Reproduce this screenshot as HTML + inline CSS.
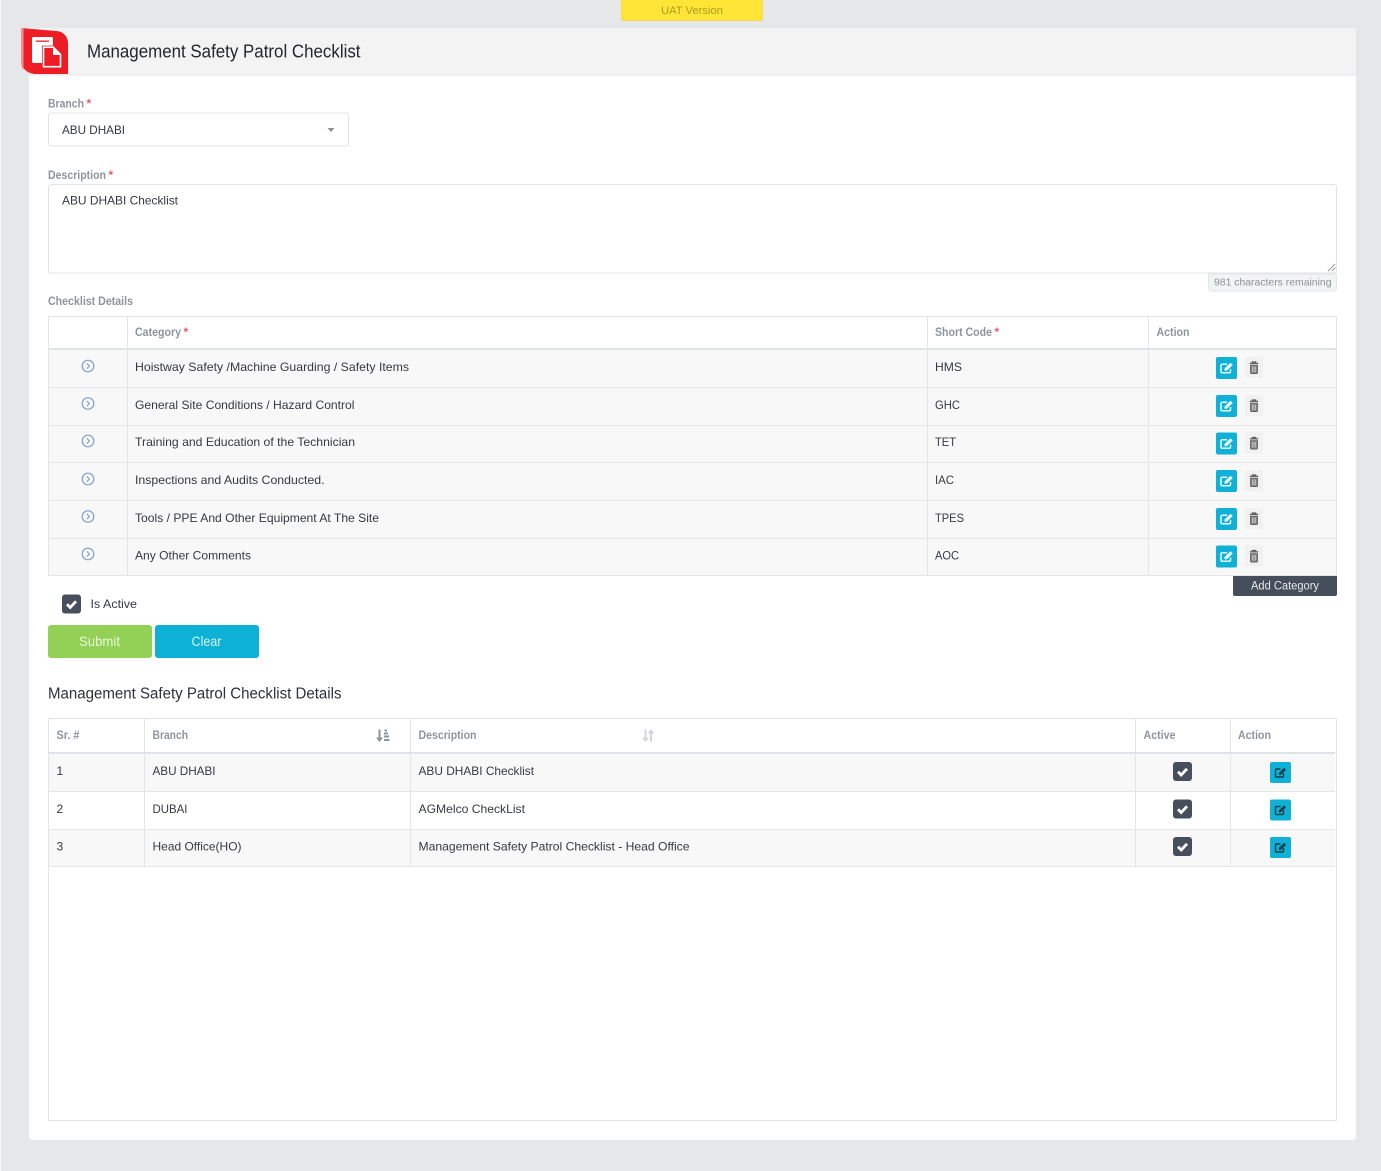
<!DOCTYPE html>
<html lang="en">
<head>
<meta charset="utf-8">
<title>Management Safety Patrol Checklist</title>
<style>
html,body{margin:0;padding:0;width:1381px;height:1171px;overflow:hidden;background:#e6e7e9}
svg{display:block}
text{font-family:"Liberation Sans",Arial,sans-serif;fill:#35393f;font-size:12px}
.lb{font-weight:bold;fill:#8f949c;font-size:11.5px}
.st{fill:#ee5a5f;font-weight:bold;font-size:12px}
.ln{fill:none;stroke:#e3e5e8;stroke-width:1}
</style>
</head>
<body>
<svg width="1381" height="1171" viewBox="0 0 1381 1171" xmlns="http://www.w3.org/2000/svg">
<defs>
<g id="edit">
  <rect x="0" y="0" width="21" height="22" rx="2" fill="#0fb1d6"/>
  <path d="M14.500 12v2.500a1.200 1.200 0 0 1-1.200 1.200H6.200A1.200 1.200 0 0 1 5 14.500V8.500a1.200 1.200 0 0 1 1.200-1.200h5" fill="none" stroke="#e8fbff" stroke-width="1.500"/>
  <path d="M8.500 11.500 14.500 5.800 16.800 8 10.800 13.700H8.500z" fill="#e8fbff"/>
</g>
<g id="edit2">
  <rect x="0" y="0" width="21" height="21" rx="2" fill="#0fb1d6"/>
  <path d="M13.500 11v3a1 1 0 0 1-1 1h-6a1 1 0 0 1-1-1V8a1 1 0 0 1 1-1h4" fill="none" stroke="#123f4d" stroke-width="1.400"/>
  <path d="M8.800 11 14.200 5.800 16.200 7.700 10.800 13H8.800z" fill="#123f4d"/>
</g>
<g id="trash">
  <rect x="0" y="0" width="18" height="21" rx="2" fill="#f1f1f2"/>
  <path d="M5.600 8.200h6.800v7.300a1 1 0 0 1-1 1H6.600a1 1 0 0 1-1-1z" fill="#8a8a8a" stroke="#5e5e5e" stroke-width="1"/>
  <path d="M4.800 6.400h8.400M7.300 6.200V5h3.400v1.200" fill="none" stroke="#5e5e5e" stroke-width="1.200"/>
  <path d="M7.600 9.500v5.500M9 9.500v5.500M10.400 9.500v5.500" stroke="#e4e4e4" stroke-width=".5"/>
</g>
<g id="arrowc">
  <circle cx="0" cy="0" r="5.800" fill="none" stroke="#7da0cc" stroke-width="1.200"/>
  <path d="M-1.200-2.600 1.400 0-1.200 2.600" fill="none" stroke="#7da0cc" stroke-width="1.100"/>
</g>
<g id="chk">
  <rect x="0" y="0" width="19" height="19" rx="3" fill="#474f5c"/>
  <path d="M5 9.800 8.200 13 14 6.800" fill="none" stroke="#fff" stroke-width="2.800"/>
</g>
</defs>

<rect width="1381" height="1171" fill="#e6e7e9"/>
<rect x="0" y="0" width="1" height="1171" fill="#f4f4f5"/>

<!-- card -->
<rect x="29" y="28" width="1327" height="1112" rx="4" fill="#fff"/>
<path d="M29 28h1327v47H29z" fill="#f3f3f4"/>
<rect x="29" y="74.500" width="1327" height="1" fill="#e6e6e8"/>

<!-- UAT -->
<rect x="621.500" y="-3" width="141" height="23.500" rx="2" fill="#ffe535" stroke="#f3d746"/>
<text x="661" y="14" style="font-size:11px;fill:#ad9c22" textLength="62" lengthAdjust="spacingAndGlyphs">UAT Version</text>

<!-- logo -->
<path d="M21 28v32a14 14 0 0 0 14 14h33V43a12 12 0 0 0-12-12H30z" fill="#ee1c25"/>
<path d="M21 28l9 3h26a12 12 0 0 1 0 0z" fill="#ee1c25"/>
<path d="M21 28h2.500v42a14 14 0 0 1-2.500-10z" fill="#f58e92"/>
<rect x="32" y="37" width="21" height="26" rx="1.500" fill="#fff"/>
<rect x="36" y="40.500" width="13" height="1.300" fill="#ee1c25"/>
<path d="M43.500 47.200h9.800l7.200 7.300v12.200h-17z" fill="#ee1c25" stroke="#ee1c25" stroke-width="3.200"/>
<path d="M43.500 47.200h9.800l7.200 7.300v12.200h-17z" fill="#ee1c25" stroke="#fff" stroke-width="1.600"/>
<path d="M53 47.500v7.500h7.500z" fill="#fff"/>
<text x="87" y="57.500" style="font-size:18px;fill:#23262b" textLength="273.500" lengthAdjust="spacingAndGlyphs">Management Safety Patrol Checklist</text>

<!-- branch -->
<text class="lb" x="48" y="107.500" textLength="36" lengthAdjust="spacingAndGlyphs">Branch</text>
<text class="st" x="86.500" y="107.500">*</text>
<rect x="48.500" y="113" width="300" height="33" rx="3" fill="#fff" stroke="#e0e3e6"/>
<text x="62" y="134" textLength="63" lengthAdjust="spacingAndGlyphs">ABU DHABI</text>
<path d="M327.500 128h7l-3.500 4z" fill="#8b9097"/>

<!-- description -->
<text class="lb" x="48" y="179" textLength="58" lengthAdjust="spacingAndGlyphs">Description</text>
<text class="st" x="108.500" y="179">*</text>
<rect x="48.500" y="184.500" width="1288" height="88.500" rx="3" fill="#fff" stroke="#e0e3e6"/>
<text x="62" y="204.500" textLength="116" lengthAdjust="spacingAndGlyphs">ABU DHABI Checklist</text>
<path d="M1328 271l7-7M1332 271l3.500-3.500" stroke="#9a9a9a" stroke-width="1" fill="none"/>
<path d="M1208.500 274h128v14a3 3 0 0 1-3 3h-122a3 3 0 0 1-3-3z" fill="#f2f3f4" stroke="#e3e5e8"/>
<text x="1214" y="285.500" style="font-size:10.500px;fill:#8d9199" textLength="117.500" lengthAdjust="spacingAndGlyphs">981 characters remaining</text>

<!-- checklist -->
<text class="lb" x="48" y="305" textLength="85" lengthAdjust="spacingAndGlyphs">Checklist Details</text>

<rect x="48.500" y="316.500" width="1288" height="259" fill="#fff"/>
<rect x="49" y="350" width="1287" height="225" fill="#f8f8f8"/>
<rect x="49" y="348" width="1287" height="2" fill="#dfe2e6"/>
<path class="ln" d="M49 387.500h1287M49 425.500h1287M49 462.500h1287M49 500.500h1287M49 538.500h1287"/>
<rect class="ln" x="48.500" y="316.500" width="1288" height="259"/>
<path class="ln" d="M127.500 317v258M927.500 317v258M1148.500 317v258"/>

<text class="lb" x="135" y="336" textLength="46" lengthAdjust="spacingAndGlyphs">Category</text>
<text class="st" x="183.500" y="336">*</text>
<text class="lb" x="935" y="336" textLength="57" lengthAdjust="spacingAndGlyphs">Short Code</text>
<text class="st" x="994.500" y="336">*</text>
<text class="lb" x="1156.500" y="336" textLength="33" lengthAdjust="spacingAndGlyphs">Action</text>

<text x="135" y="371" textLength="274" lengthAdjust="spacingAndGlyphs">Hoistway Safety /Machine Guarding / Safety Items</text>
<text x="135" y="409" textLength="219.500" lengthAdjust="spacingAndGlyphs">General Site Conditions / Hazard Control</text>
<text x="135" y="446" textLength="220" lengthAdjust="spacingAndGlyphs">Training and Education of the Technician</text>
<text x="135" y="484" textLength="189.500" lengthAdjust="spacingAndGlyphs">Inspections and Audits Conducted.</text>
<text x="135" y="522" textLength="244" lengthAdjust="spacingAndGlyphs">Tools / PPE And Other Equipment At The Site</text>
<text x="135" y="559.500" textLength="116" lengthAdjust="spacingAndGlyphs">Any Other Comments</text>

<text x="935" y="371" textLength="27" lengthAdjust="spacingAndGlyphs">HMS</text>
<text x="935" y="409" textLength="25" lengthAdjust="spacingAndGlyphs">GHC</text>
<text x="935" y="446" textLength="21" lengthAdjust="spacingAndGlyphs">TET</text>
<text x="935" y="484" textLength="19" lengthAdjust="spacingAndGlyphs">IAC</text>
<text x="935" y="522" textLength="29" lengthAdjust="spacingAndGlyphs">TPES</text>
<text x="935" y="559.500" textLength="24" lengthAdjust="spacingAndGlyphs">AOC</text>

<use href="#arrowc" x="88" y="366"/>
<use href="#arrowc" x="88" y="403.500"/>
<use href="#arrowc" x="88" y="441"/>
<use href="#arrowc" x="88" y="479"/>
<use href="#arrowc" x="88" y="516.500"/>
<use href="#arrowc" x="88" y="554"/>

<use href="#edit" x="1216" y="357"/><use href="#trash" x="1245" y="357"/>
<use href="#edit" x="1216" y="395"/><use href="#trash" x="1245" y="395"/>
<use href="#edit" x="1216" y="432.500"/><use href="#trash" x="1245" y="432.500"/>
<use href="#edit" x="1216" y="470"/><use href="#trash" x="1245" y="470"/>
<use href="#edit" x="1216" y="508"/><use href="#trash" x="1245" y="508"/>
<use href="#edit" x="1216" y="545.500"/><use href="#trash" x="1245" y="545.500"/>

<!-- add category -->
<path d="M1233 576h104v18a2 2 0 0 1-2 2h-100a2 2 0 0 1-2-2z" fill="#454e5b"/>
<text x="1251" y="589.500" style="font-size:11.500px;fill:#e6e8ea" textLength="68" lengthAdjust="spacingAndGlyphs">Add Category</text>

<!-- active -->
<use href="#chk" x="62" y="594.500"/>
<text x="90.500" y="608" textLength="46.500" lengthAdjust="spacingAndGlyphs">Is Active</text>

<!-- buttons -->
<rect x="48" y="625" width="104" height="33" rx="3" fill="#92d156"/>
<text x="79" y="646" style="font-size:14px;fill:#e9f7da" textLength="41" lengthAdjust="spacingAndGlyphs">Submit</text>
<rect x="155" y="625" width="104" height="33" rx="3" fill="#0db1d5"/>
<text x="191.500" y="646" style="font-size:14px;fill:#d8f4fa" textLength="30" lengthAdjust="spacingAndGlyphs">Clear</text>

<text x="48" y="698.500" style="font-size:15.500px;fill:#2e3136" textLength="293.500" lengthAdjust="spacingAndGlyphs">Management Safety Patrol Checklist Details</text>

<!-- table 2 -->
<rect x="48.500" y="718.500" width="1288" height="402" fill="#fff"/>
<rect x="49" y="754" width="1286" height="37" fill="#f8f8f8"/>
<rect x="49" y="830" width="1286" height="36" fill="#f8f8f8"/>
<rect x="49" y="752" width="1286" height="2" fill="#dfe2e6"/>
<path class="ln" d="M49 791.500h1286M49 829.500h1286M49 866.500h1286"/>
<rect class="ln" x="48.500" y="718.500" width="1288" height="402"/>
<path class="ln" d="M144.500 719v147M410.500 719v147M1135.500 719v147M1230.500 719v147"/>

<text class="lb" x="56.500" y="739" textLength="23" lengthAdjust="spacingAndGlyphs">Sr. #</text>
<text class="lb" x="152.500" y="739" textLength="35.500" lengthAdjust="spacingAndGlyphs">Branch</text>
<text class="lb" x="418.500" y="739" textLength="58" lengthAdjust="spacingAndGlyphs">Description</text>
<text class="lb" x="1143.500" y="739" textLength="32" lengthAdjust="spacingAndGlyphs">Active</text>
<text class="lb" x="1238" y="739" textLength="33" lengthAdjust="spacingAndGlyphs">Action</text>

<path d="M379.500 729.500v11" fill="none" stroke="#8f949b" stroke-width="2"/>
<path d="M376 737.500h7l-3.500 4.500z" fill="#8f949b"/>
<path d="M384.500 730.500h2.500M384 733.500h4M384 736.500h5M384 740h5.500" stroke="#8f949b" stroke-width="2" fill="none"/>
<path d="M645.500 729.500v10" fill="none" stroke="#d3d5d9" stroke-width="2"/>
<path d="M642 737.500h7l-3.500 4.500z" fill="#d3d5d9"/>
<path d="M651 741.500v-10" fill="none" stroke="#d3d5d9" stroke-width="2"/>
<path d="M647.500 733.500h7l-3.500-4.500z" fill="#d3d5d9"/>

<text x="56.500" y="775">1</text>
<text x="56.500" y="813">2</text>
<text x="56.500" y="850.500">3</text>
<text x="152.500" y="775" textLength="63" lengthAdjust="spacingAndGlyphs">ABU DHABI</text>
<text x="152.500" y="813" textLength="35" lengthAdjust="spacingAndGlyphs">DUBAI</text>
<text x="152.500" y="850.500" textLength="89" lengthAdjust="spacingAndGlyphs">Head Office(HO)</text>
<text x="418.500" y="775" textLength="115.500" lengthAdjust="spacingAndGlyphs">ABU DHABI Checklist</text>
<text x="418.500" y="813" textLength="106.500" lengthAdjust="spacingAndGlyphs">AGMelco CheckList</text>
<text x="418.500" y="850.500" textLength="271" lengthAdjust="spacingAndGlyphs">Management Safety Patrol Checklist - Head Office</text>

<use href="#chk" x="1173" y="762"/>
<use href="#chk" x="1173" y="799.500"/>
<use href="#chk" x="1173" y="837"/>
<use href="#edit2" x="1270" y="762"/>
<use href="#edit2" x="1270" y="799.500"/>
<use href="#edit2" x="1270" y="837"/>
</svg>
</body>
</html>
